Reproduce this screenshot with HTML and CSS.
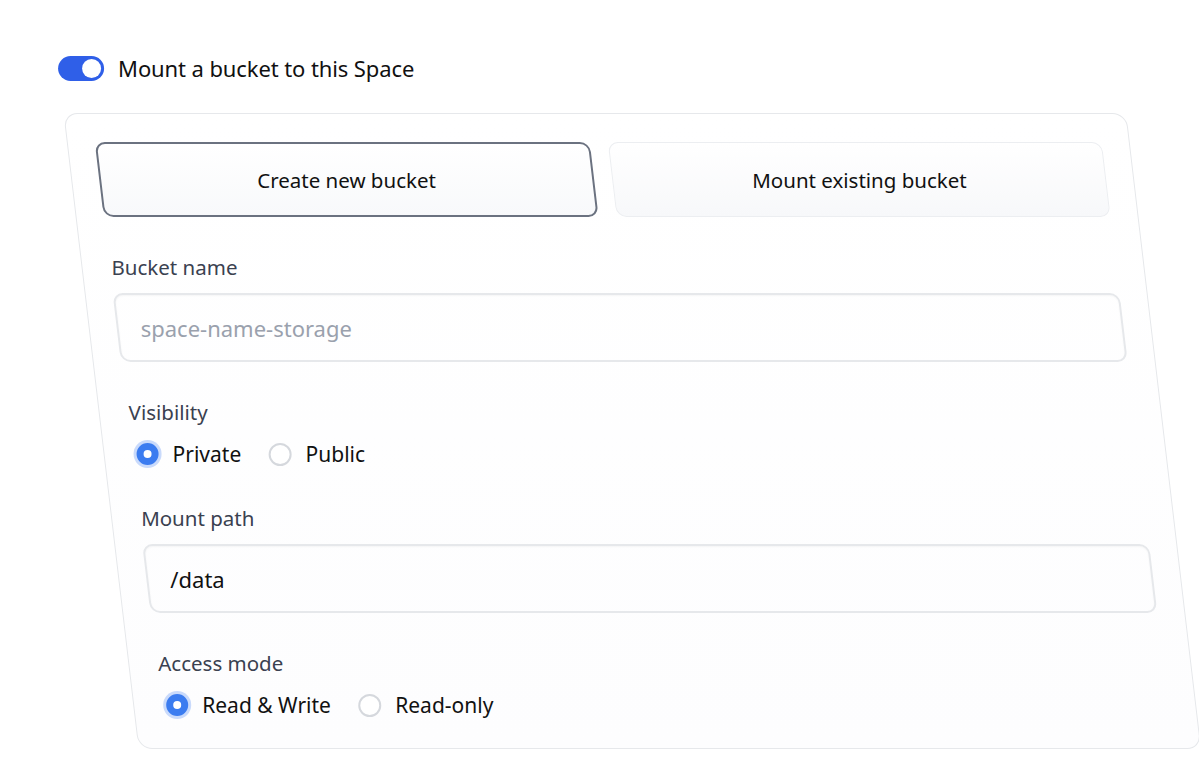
FILE: index.html
```html
<!DOCTYPE html>
<html lang="en">
<head>
  <meta charset="UTF-8" />
  <meta name="viewport" content="width=device-width, initial-scale=1.0" />
  <title>Mount a bucket</title>
  <link rel="stylesheet" href="styles.css">
</head>
<body>
  <main class="page">
    <div class="mount-toggle">
      <span class="switch on"><span class="knob"></span></span>
      <span class="toggle-label txt">Mount a bucket to this Space</span>
    </div>

    <section class="bucket-card">
      <div class="tabs">
        <div class="tab active"><span class="txt">Create new bucket</span></div>
        <div class="tab"><span class="txt">Mount existing bucket</span></div>
      </div>

      <div class="field">
        <div class="field-label"><span class="txt">Bucket name</span></div>
        <div class="text-input"><span class="txt placeholder">space-name-storage</span></div>
      </div>

      <div class="field">
        <div class="field-label"><span class="txt">Visibility</span></div>
        <div class="radio-row">
          <span class="option"><span class="radio checked"></span><span class="txt">Private</span></span>
          <span class="option"><span class="radio"></span><span class="txt">Public</span></span>
        </div>
      </div>

      <div class="field">
        <div class="field-label"><span class="txt">Mount path</span></div>
        <div class="text-input"><span class="txt value">/data</span></div>
      </div>

      <div class="field">
        <div class="field-label"><span class="txt">Access mode</span></div>
        <div class="radio-row">
          <span class="option"><span class="radio checked"></span><span class="txt">Read &amp; Write</span></span>
          <span class="option"><span class="radio"></span><span class="txt">Read-only</span></span>
        </div>
      </div>
    </section>
  </main>
</body>
</html>
```

FILE: styles.css
```css
body { margin: 0; background: #fff; font-family: "Noto Sans", "Open Sans", sans-serif; color: #111; overflow: hidden; }

/* the whole shot leans to the right, text stays upright */
.page { padding: 54px 0 0 50px; transform: skewX(6.73deg); transform-origin: 0 0; }
.txt { display: inline-block; transform: skewX(-6.73deg); }

.mount-toggle { display: flex; align-items: center; gap: 14px; height: 28px; }
.switch { width: 46px; height: 25px; border-radius: 13px; background: #2f5fe8; display: flex; align-items: center; padding: 0 3px; box-sizing: border-box; justify-content: flex-end; transform: skewX(-6.73deg); }
.knob { width: 19px; height: 19px; border-radius: 50%; background: #fff; }
.toggle-label { font-size: 22px; letter-spacing: -0.1px; }

.bucket-card { width: 1063px; box-sizing: border-box; margin-top: 31px; padding: 28px 27px 29px; border: 1px solid #e6e8eb; border-radius: 14px; background: linear-gradient(#fff, #fdfdfe); }

.tabs { display: grid; grid-template-columns: 1fr 1fr; gap: 18px; }
.tab { height: 75px; box-sizing: border-box; display: flex; align-items: center; justify-content: center; border: 1px solid #eceef1; border-radius: 10px; background: linear-gradient(#fff, #f7f8fa); font-size: 20.5px; }
.tab.active { border: 2px solid #6b7280; background: linear-gradient(#fff, #f8f9fb); }

.field { margin-top: 36px; }
.field-label { height: 28px; line-height: 28px; padding-left: 2px; margin-bottom: 12px; font-size: 20.5px; color: #3a4150; }
.text-input { height: 69px; box-sizing: border-box; display: flex; align-items: center; padding: 0 22px; border: 2px solid #e6e8eb; border-radius: 10px; box-shadow: inset 0 1px 2px rgba(0,0,0,0.04); font-size: 22px; }
.placeholder { color: #9aa1ad; }
.value { color: #111; }

.radio-row { display: flex; align-items: center; gap: 27px; height: 28px; margin-top: 14px; padding-left: 5px; }
.option { display: flex; align-items: center; gap: 14px; font-size: 21px; }
.radio { width: 23px; height: 23px; box-sizing: border-box; border-radius: 50%; border: 2px solid #d5d8dd; background: #fff; transform: skewX(-6.73deg); }
.radio.checked { width: 22px; height: 22px; border: 7px solid #3b7cf0; box-shadow: 0 0 0 3px #c9dafb; }
```
